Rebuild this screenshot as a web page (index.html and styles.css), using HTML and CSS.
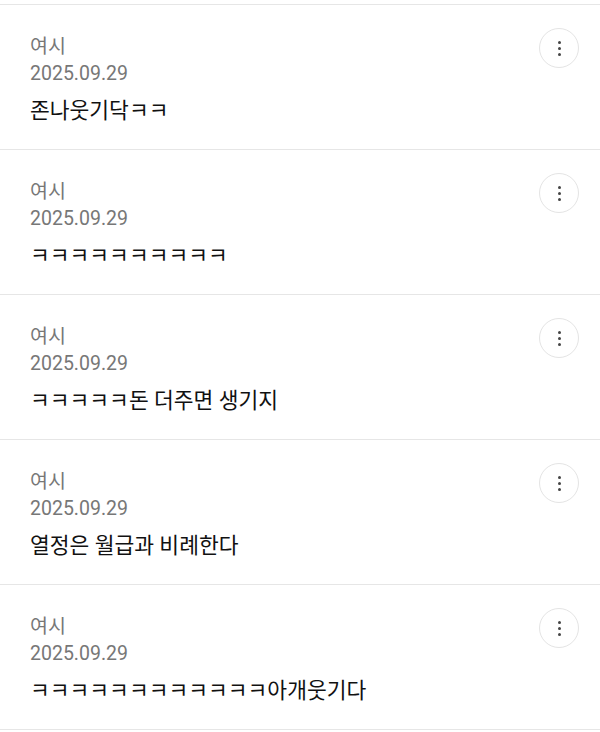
FILE: index.html
```html
<!DOCTYPE html>
<html lang="ko">
<head>
<meta charset="utf-8">
<link rel="stylesheet" href="styles.css">
</head>
<body>
<div class="top-gap"></div>
<ul class="comments">
  <li class="comment">
    <div class="body">
      <div class="author">여시</div>
      <div class="date">2025.09.29</div>
      <p class="text">존나웃기닥ㅋㅋ</p>
    </div>
    <button class="more" aria-label="더보기"><span></span><span></span><span></span></button>
  </li>
  <li class="comment">
    <div class="body">
      <div class="author">여시</div>
      <div class="date">2025.09.29</div>
      <p class="text">ㅋㅋㅋㅋㅋㅋㅋㅋㅋㅋ</p>
    </div>
    <button class="more" aria-label="더보기"><span></span><span></span><span></span></button>
  </li>
  <li class="comment">
    <div class="body">
      <div class="author">여시</div>
      <div class="date">2025.09.29</div>
      <p class="text">ㅋㅋㅋㅋㅋ돈 더주면 생기지</p>
    </div>
    <button class="more" aria-label="더보기"><span></span><span></span><span></span></button>
  </li>
  <li class="comment">
    <div class="body">
      <div class="author">여시</div>
      <div class="date">2025.09.29</div>
      <p class="text">열정은 월급과 비례한다</p>
    </div>
    <button class="more" aria-label="더보기"><span></span><span></span><span></span></button>
  </li>
  <li class="comment">
    <div class="body">
      <div class="author">여시</div>
      <div class="date">2025.09.29</div>
      <p class="text">ㅋㅋㅋㅋㅋㅋㅋㅋㅋㅋㅋㅋ아개웃기다</p>
    </div>
    <button class="more" aria-label="더보기"><span></span><span></span><span></span></button>
  </li>
</ul>
</body>
</html>
```
FILE: styles.css
```css
html, body {
  margin: 0;
  padding: 0;
  background: #fff;
}
body {
  font-family: Roboto, "Noto Sans CJK KR", sans-serif;
}
.top-gap {
  height: 4px;
}
.comments {
  list-style: none;
  margin: 0;
  padding: 0;
}
.comment {
  display: flex;
  align-items: flex-start;
  height: 145px;
  box-sizing: border-box;
  border-top: 1px solid #e6e6e6;
  padding: 23px 21px 0 30px;
}
.comment:last-child {
  height: 146px;
  border-bottom: 1px solid #e6e6e6;
}
.body {
  flex: 1;
  padding-top: 5px;
}
.author, .date {
  font-size: 19.5px;
  line-height: 27px;
  color: #777;
}
.text {
  margin: 10px 0 0;
  font-size: 21.5px;
  line-height: 28px;
  color: #111;
}
.more {
  width: 40px;
  height: 40px;
  border: 1px solid #e4e4e4;
  border-radius: 50%;
  background: #fff;
  padding: 0;
  display: flex;
  flex-direction: column;
  align-items: center;
  justify-content: center;
  gap: 3px;
  box-sizing: border-box;
}
.more span {
  width: 3px;
  height: 3px;
  border-radius: 50%;
  background: #444;
}
```
